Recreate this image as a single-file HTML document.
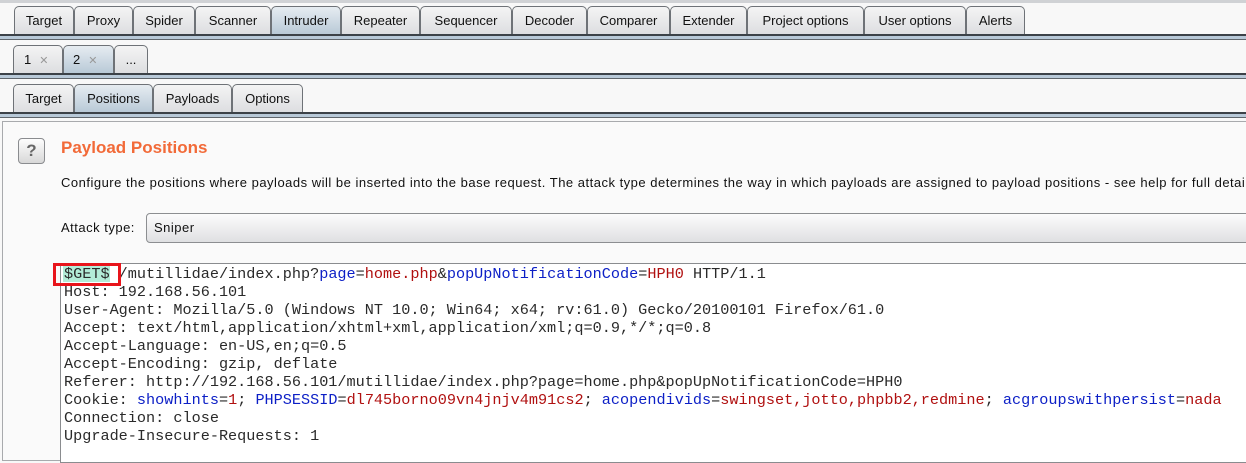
<!DOCTYPE html>
<html><head><meta charset="utf-8"><style>
*{margin:0;padding:0;box-sizing:border-box}
body{width:1246px;height:450px;overflow:hidden;background:#f8f8f8;position:relative;font-family:"Liberation Sans",sans-serif;font-size:13px;color:#111}
.tab{position:absolute;height:29px;border:1px solid #6e7277;border-bottom:none;border-radius:5px 5px 0 0;background:linear-gradient(#f4f4f4,#dcdde0);text-align:center;line-height:28px;font-size:13px;color:#111}
.tab.sel{background:linear-gradient(#e6ecf1,#b7c8d6)}
.bar{position:absolute;left:0;width:1246px;height:6px;background:#b8c9d8;border-top:2px solid #3c4248;border-bottom:1px solid #60666c}
.x{color:#999;font-size:11px;margin-left:8px}
.code{position:absolute;left:64px;top:265px;font-family:"Liberation Mono",monospace;font-size:15.2px;line-height:18px;color:#2a2a2a;white-space:pre}
.b{color:#0c1fc6}.r{color:#b01010}
.t{font-size:13px;letter-spacing:0.5px}
</style></head><body>
<div style="position:absolute;left:0;top:0;width:1246px;height:3px;background:#d0d2d5"></div>
<div class="tab" style="left:14px;top:6px;width:60px">Target</div>
<div class="tab" style="left:74px;top:6px;width:59px">Proxy</div>
<div class="tab" style="left:133px;top:6px;width:62px">Spider</div>
<div class="tab" style="left:195px;top:6px;width:76px">Scanner</div>
<div class="tab sel" style="left:271px;top:6px;width:70px">Intruder</div>
<div class="tab" style="left:341px;top:6px;width:79px">Repeater</div>
<div class="tab" style="left:420px;top:6px;width:92px">Sequencer</div>
<div class="tab" style="left:512px;top:6px;width:75px">Decoder</div>
<div class="tab" style="left:587px;top:6px;width:83px">Comparer</div>
<div class="tab" style="left:670px;top:6px;width:77px">Extender</div>
<div class="tab" style="left:747px;top:6px;width:117px">Project options</div>
<div class="tab" style="left:864px;top:6px;width:102px">User options</div>
<div class="tab" style="left:966px;top:6px;width:59px">Alerts</div>
<div class="bar" style="top:34px"></div>
<div class="tab" style="left:13px;top:45px;width:50px;text-align:left;padding-left:10px">1<span class="x">✕</span></div>
<div class="tab sel" style="left:63px;top:45px;width:51px;text-align:left;padding-left:9px">2<span class="x">✕</span></div>
<div class="tab" style="left:114px;top:45px;width:34px">...</div>
<div class="bar" style="top:73px"></div>
<div class="tab" style="left:13px;top:84px;width:61px">Target</div>
<div class="tab sel" style="left:74px;top:84px;width:79px">Positions</div>
<div class="tab" style="left:153px;top:84px;width:79px">Payloads</div>
<div class="tab" style="left:232px;top:84px;width:71px">Options</div>
<div class="bar" style="top:112px"></div>
<div style="position:absolute;left:2px;top:121px;width:1250px;height:340px;border:1px solid #a8aaad;background:#fafafa"></div>
<div style="position:absolute;left:18px;top:138px;width:27px;height:26px;border:1px solid #8a8c8f;border-radius:4px;background:linear-gradient(#fdfdfd,#d8d8d8);text-align:center;font:bold 17px/24px 'Liberation Sans',sans-serif;color:#666">?</div>
<div style="position:absolute;left:61px;top:138px;font-size:17px;font-weight:bold;color:#f26a38">Payload Positions</div>
<div class="t" style="position:absolute;left:61px;top:175px;white-space:nowrap">Configure the positions where payloads will be inserted into the base request. The attack type determines the way in which payloads are assigned to payload positions - see help for full details.</div>
<div class="t" style="position:absolute;left:61px;top:220px">Attack type:</div>
<div class="t" style="position:absolute;left:146px;top:213px;width:1110px;height:30px;border:1px solid #8c8e91;border-radius:4px;background:linear-gradient(#fcfcfc,#dfe0e2);padding-left:7px;line-height:28px">Sniper</div>
<div style="position:absolute;left:60px;top:263px;width:1200px;height:200px;border:1px solid #8a8c8f;border-right:none;background:#fff"></div>
<div style="position:absolute;left:63px;top:265px;width:47px;height:17px;background:#b3ecd8"></div>
<div class="code">$GET$ /mutillidae/index.php?<span class="b">page</span>=<span class="r">home.php</span>&amp;<span class="b">popUpNotificationCode</span>=<span class="r">HPH0</span> HTTP/1.1
Host: 192.168.56.101
User-Agent: Mozilla/5.0 (Windows NT 10.0; Win64; x64; rv:61.0) Gecko/20100101 Firefox/61.0
Accept: text/html,application/xhtml+xml,application/xml;q=0.9,*/*;q=0.8
Accept-Language: en-US,en;q=0.5
Accept-Encoding: gzip, deflate
Referer: http://192.168.56.101/mutillidae/index.php?page=home.php&amp;popUpNotificationCode=HPH0
Cookie: <span class="b">showhints</span>=<span class="r">1</span>; <span class="b">PHPSESSID</span>=<span class="r">dl745borno09vn4jnjv4m91cs2</span>; <span class="b">acopendivids</span>=<span class="r">swingset,jotto,phpbb2,redmine</span>; <span class="b">acgroupswithpersist</span>=<span class="r">nada</span>
Connection: close
Upgrade-Insecure-Requests: 1</div>
<div style="position:absolute;left:53px;top:263px;width:68px;height:23px;border:3px solid #e8141b"></div>
</body></html>
